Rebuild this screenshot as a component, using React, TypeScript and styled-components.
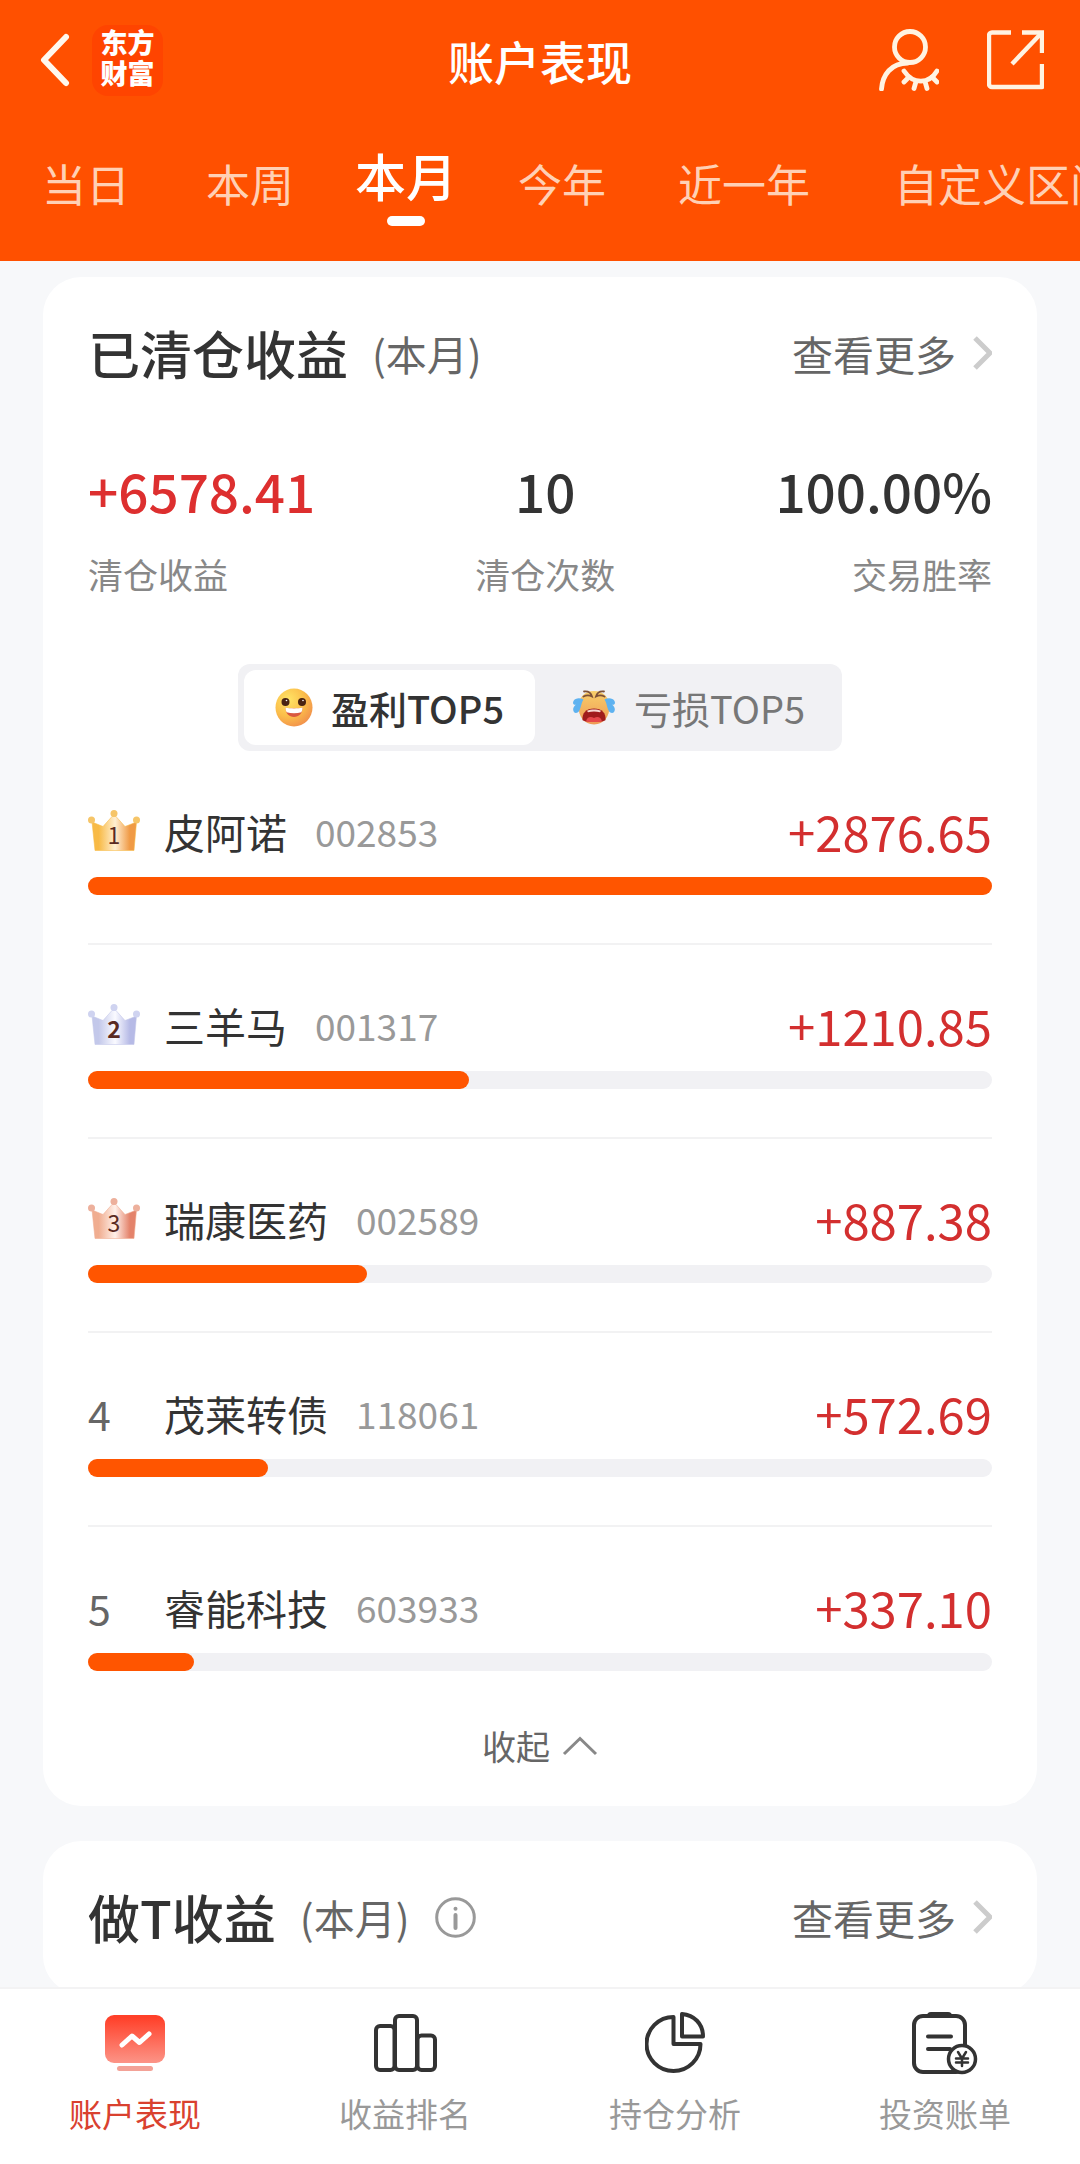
import React, { useState } from "react";
import styled, { createGlobalStyle } from "styled-components";

const GlobalStyle = createGlobalStyle`
  *, *::before, *::after { box-sizing: border-box; }
  html, body { margin: 0; padding: 0; }
  body {
    background: #f7f8fa;
    color: #333;
    font-family: "Noto Sans CJK SC", "Noto Sans", sans-serif;
    -webkit-font-smoothing: antialiased;
  }
  button { font: inherit; color: inherit; border: 0; padding: 0; margin: 0; background: none; cursor: pointer; }
  a { color: inherit; text-decoration: none; }
  svg { display: block; flex: none; }
  h1, h2, p, ol, ul, dl, dd { margin: 0; padding: 0; }
  ol, ul { list-style: none; }
`;

const Shell = styled.div`
  display: flex;
  flex-direction: column;
  height: 100vh;
  overflow: hidden;
`;

/* ---------- header ---------- */

const Header = styled.header`
  flex: none;
  background: #ff5000;
  color: #fff;
  overflow: hidden;
`;

const TitleBar = styled.div`
  display: grid;
  grid-template-columns: 1fr auto 1fr;
  align-items: center;
  height: 120px;
  padding: 0 36px;
`;

const BarStart = styled.div`
  display: flex;
  align-items: center;
  gap: 22px;
  padding-left: 4px;
`;

const BarEnd = styled.div`
  display: flex;
  align-items: center;
  justify-content: flex-end;
  gap: 48px;
`;

const Logo = styled.a`
  display: flex;
  flex-direction: column;
  align-items: center;
  justify-content: center;
  width: 71px;
  height: 71px;
  border-radius: 16px;
  background: #ff4400;
  font-family: "Liberation Sans", "Noto Sans CJK SC", sans-serif;
  font-size: 27px;
  font-weight: 900;
  line-height: 31px;
`;

const PageTitle = styled.h1`
  font-size: 46px;
  font-weight: 500;
  line-height: 60px;
`;

const Tabs = styled.nav`
  display: flex;
  align-items: flex-start;
  height: 141px;
  padding-left: 8px;
`;

const Tab = styled.button<{ $active: boolean; $chars: number }>`
  display: flex;
  flex: none;
  flex-direction: column;
  align-items: center;
  gap: 9px;
  width: ${(p) => (p.$chars + 1) * 52}px;
  padding-top: ${(p) => (p.$active ? 23 : 31)}px;
  font-size: ${(p) => (p.$active ? 51 : 44)}px;
  font-weight: ${(p) => (p.$active ? 500 : 400)};
  line-height: 64px;
  white-space: nowrap;
  color: ${(p) => (p.$active ? "#fff" : "#ffd0b5")};

  &:first-child { margin-right: 8px; }

  &::after {
    content: "";
    width: 38px;
    height: 10px;
    border-radius: 5px;
    background: ${(p) => (p.$active ? "#fff" : "transparent")};
  }
`;

/* ---------- cards ---------- */

const Main = styled.main`
  display: flex;
  flex: 1;
  flex-direction: column;
  gap: 35px;
  min-height: 0;
  padding: 16px 43px;
  overflow-y: auto;
  scrollbar-width: none;
`;

const Card = styled.section<{ $bottom: number }>`
  flex: none;
  padding: 46px 45px ${(p) => p.$bottom}px;
  border-radius: 38px;
  background: #fff;
`;

const CardHead = styled.div`
  display: flex;
  align-items: center;
  justify-content: space-between;
  height: 60px;
`;

const CardTitle = styled.h2`
  display: flex;
  align-items: center;
  font-size: 52px;
  font-weight: 500;
  line-height: 60px;
`;

const Period = styled.span`
  margin-left: 24px;
  font-size: 41px;
  font-weight: 400;
  color: #666;
`;

const InfoButton = styled.button`
  margin-left: 25px;
`;

const MoreLink = styled.a`
  display: flex;
  align-items: center;
  gap: 16px;
  font-size: 41px;
  line-height: 60px;
  color: #666;
`;

const Stats = styled.dl`
  display: flex;
  justify-content: space-between;
  margin-top: 75px;
`;

const Stat = styled.div<{ $align: string }>`
  display: flex;
  flex-direction: column-reverse;
  gap: 30px;
  align-items: ${(p) => p.$align};
`;

const StatLabel = styled.dt`
  font-size: 35px;
  line-height: 44px;
  color: #888;
`;

const StatValue = styled.dd<{ $up?: boolean }>`
  font-size: 53px;
  font-weight: 500;
  line-height: 64px;
  color: ${(p) => (p.$up ? "#dd2f2f" : "#333")};
`;

const Segment = styled.div`
  display: flex;
  gap: 6px;
  width: 604px;
  max-width: 100%;
  margin: 68px auto 0;
  padding: 6px;
  border-radius: 12px;
  background: #f1f1f4;
`;

const SegmentButton = styled.button<{ $active: boolean }>`
  display: flex;
  flex: 1 1 auto;
  align-items: center;
  justify-content: center;
  gap: 18px;
  height: 75px;
  border-radius: 12px;
  background: ${(p) => (p.$active ? "#fff" : "transparent")};
  color: ${(p) => (p.$active ? "#333" : "#777")};
  font-size: 38px;
  font-weight: ${(p) => (p.$active ? 500 : 400)};
  line-height: 48px;
`;

/* ---------- ranking ---------- */

const Row = styled.li`
  padding: 50px 0 48px;
  border-bottom: 2px solid #f2f2f3;

  &:last-child { border-bottom: 0; }
`;

const RowHead = styled.div`
  display: flex;
  align-items: center;
  height: 60px;
  margin-bottom: 16px;
  line-height: 60px;
`;

const Rank = styled.span`
  flex: none;
  width: 76px;
  font-size: 41px;
  color: #666;
`;

const StockName = styled.span`
  font-size: 41px;
  color: #333;
`;

const StockCode = styled.span`
  margin-left: 28px;
  font-size: 37px;
  color: #999;
`;

const Amount = styled.span`
  margin-left: auto;
  font-size: 49px;
  color: #d32f2f;
`;

const Track = styled.div`
  height: 18px;
  border-radius: 9px;
  background: #f1f1f4;
`;

const Fill = styled.div`
  height: 100%;
  border-radius: 9px;
  background: #ff5500;
`;

const Collapse = styled.button`
  display: flex;
  align-items: center;
  gap: 12px;
  margin: 0 auto;
  font-size: 34px;
  line-height: 54px;
  color: #666;
`;

/* ---------- bottom bar ---------- */

const BottomBar = styled.nav`
  display: grid;
  flex: none;
  grid-template-columns: repeat(4, 1fr);
  height: 177px;
  border-top: 2px solid #f3f3f4;
  background: #fff;
`;

const BottomItem = styled.a<{ $active?: boolean }>`
  display: flex;
  flex-direction: column;
  align-items: center;
  gap: 14px;
  padding-top: 22px;
  font-size: 33px;
  line-height: 48px;
  color: ${(p) => (p.$active ? "#d9412f" : "#999")};
`;

const IconBox = styled.span`
  display: flex;
  align-items: center;
  justify-content: center;
  height: 64px;
`;

/* ---------- icons ---------- */

const BackIcon = () => (
  <svg width="30" height="54" viewBox="0 0 30 54" fill="none" stroke="#fff8ee" strokeWidth="6" strokeLinecap="round" strokeLinejoin="round">
    <path d="M26 4 4 27l22 23" />
  </svg>
);

const HiddenUserIcon = () => (
  <svg width="60" height="62" viewBox="0 0 60 62" fill="none" stroke="#fff3e2" strokeWidth="4.8" strokeLinecap="round">
    <circle cx="31" cy="18" r="15.500" />
    <path d="M2.5 60C3.500 46 12 34 29 34" />
    <path d="M25 42c9 13.500 25 13.500 33 0" />
    <path d="M30 48l-5 5M37 52.500l-2 7M46 52.500l2 7M53 48l5 5" />
  </svg>
);

const ShareIcon = () => (
  <svg width="57" height="60" viewBox="0 0 57 60" fill="none" stroke="#fff3e2" strokeWidth="4.400">
    <path d="M24 2.500H5A3 3 0 0 0 2 5.500V54a3 3 0 0 0 3 3h50V34" strokeLinejoin="round" />
    <path d="M35 2.500h20V23" />
    <path d="M55 2.500 25 34" />
  </svg>
);

const ChevronRight = () => (
  <svg width="20" height="34" viewBox="0 0 20 34" fill="none" stroke="#ccc" strokeWidth="5">
    <path d="M3 2 18 17 3 32" />
  </svg>
);

const ChevronUp = () => (
  <svg width="36" height="20" viewBox="0 0 36 20" fill="none" stroke="#888" strokeWidth="3">
    <path d="M2 18 18 2.500 34 18" />
  </svg>
);

const InfoIcon = () => (
  <svg width="41" height="41" viewBox="0 0 41 41" fill="none" stroke="#999" strokeWidth="3">
    <circle cx="20.500" cy="20.500" r="18.800" />
    <path d="M20.500 18v13" strokeWidth="4" strokeLinecap="round" />
    <circle cx="20.500" cy="11.800" r="2" fill="#999" stroke="none" />
  </svg>
);

const HappyFace = () => (
  <svg width="38" height="39" viewBox="0 0 38 39">
    <defs>
      <radialGradient id="happy" cx="0.35" cy="0.3" r="0.8">
        <stop offset="0" stopColor="#ffe566" />
        <stop offset="0.55" stopColor="#fbbd4a" />
        <stop offset="1" stopColor="#f08a4c" />
      </radialGradient>
    </defs>
    <ellipse cx="19" cy="19.500" rx="18.500" ry="19" fill="url(#happy)" />
    <circle cx="10.500" cy="14" r="4" fill="#4a2313" />
    <circle cx="27" cy="14" r="4" fill="#4a2313" />
    <circle cx="11.500" cy="12.500" r="0.800" fill="#fff" />
    <circle cx="28" cy="12.500" r="0.800" fill="#fff" />
    <path d="M10.500 19.500c5 1.200 12 1.200 17 0 0 6-3.500 9.500-8.500 9.500s-8.500-3.500-8.500-9.500z" fill="#d9583f" />
    <path d="M10.500 19.500c5 1.200 12 1.200 17 0 0 2-.4 3.500-1.200 4.700-4.500 1.300-10.100 1.300-14.600 0-.8-1.200-1.200-2.700-1.200-4.700z" fill="#fff" />
  </svg>
);

const CryingFace = () => (
  <svg width="44" height="36" viewBox="0 0 44 36">
    <defs>
      <linearGradient id="cry" x1="0" y1="0" x2="0" y2="1">
        <stop offset="0" stopColor="#f8cf6a" />
        <stop offset="1" stopColor="#ef9a55" />
      </linearGradient>
    </defs>
    <path d="M22 1c10 0 15.500 7 15.500 16S32 34.500 22 34.500 6.500 26 6.500 17 12 1 22 1z" fill="url(#cry)" />
    <path d="M12 1.500c4-.5 7 1.500 8 5-3-1.500-5.500-1.500-8.500 0M32 1.500c-4-.5-7 1.500-8 5 3-1.500 5.500-1.500 8.500 0" fill="none" stroke="#7d5138" strokeWidth="1.800" strokeLinecap="round" />
    <path d="M10.500 30c-.5-7 3.500-11.500 11.500-11.500S34 23 33.500 30c-1.500 2.500-21.500 2.500-23 0z" fill="#a01c1c" />
    <path d="M15 20.800c4-1.800 10-1.800 14 0l-1 1.400c-4-1-8-1-12 0z" fill="#f6d9d2" />
    <path d="M14 31.500c1-4.500 4.500-5.500 8-3.500 3.500-2 7-1 8 3.500-4 .8-12 .8-16 0z" fill="#e5484a" />
    <path d="M11.500 9.500C8 7.500 3 8 1.500 11c-1.500 3 1 4.500 2.500 3.500C-.5 18 1 23 4 23c5 0 4.500-9.500 7.500-13.500z" fill="#5eb2f0" />
    <path d="M32.500 9.500C36 7.500 41 8 42.500 11c1.500 3-1 4.500-2.500 3.500 4.500 3.500 3 8.500 0 8.500-5 0-4.500-9.500-7.500-13.500z" fill="#5eb2f0" />
  </svg>
);

const crownColors = [
  { edge: "#f8ba45", mid: "#ffefd2", end: "#f09a45", ball: "#f6c568" },
  { edge: "#c3c8ea", mid: "#fafaff", end: "#b6bae6", ball: "#cfd3f0" },
  { edge: "#f0ad90", mid: "#fff0e9", end: "#e4836b", ball: "#edb09c" },
];

const Crown = ({ place }: { place: number }) => {
  const c = crownColors[place - 1];
  return (
    <svg width="52" height="42" viewBox="0 0 52 42" role="img" aria-label={`${place}`}>
      <defs>
        <linearGradient id={`crown${place}`} x1="0" x2="1" y1="0" y2="0">
          <stop offset="0.15" stopColor={c.edge} />
          <stop offset="0.52" stopColor={c.mid} />
          <stop offset="0.85" stopColor={c.end} />
        </linearGradient>
      </defs>
      <path d="M4 12 15 16.500 24 6.500h4L37 16.500 48.500 12 46 40.500H7z" fill={`url(#crown${place})`} stroke={c.edge} strokeWidth="0.800" strokeOpacity="0.700" />
      <circle cx="3.500" cy="10" r="3.500" fill={c.ball} />
      <circle cx="26" cy="3.500" r="3.500" fill={c.ball} />
      <circle cx="48.500" cy="10" r="3.500" fill={c.ball} />
      <text x="26" y="34" textAnchor="middle" fontSize="23" fontWeight={place === 2 ? 700 : 400} fill="#5a2a22">
        {place}
      </text>
    </svg>
  );
};

const PerformanceIcon = () => (
  <svg width="60" height="56" viewBox="0 0 60 56" fill="none">
    <defs>
      <linearGradient id="screen" x1="0" y1="0" x2="0" y2="1">
        <stop offset="0.05" stopColor="#ff4029" />
        <stop offset="1" stopColor="#fc9487" />
      </linearGradient>
    </defs>
    <rect width="60" height="48" rx="9" fill="url(#screen)" />
    <path d="M17 30 27 21l7.500 6.500L44 19" stroke="#fff" strokeWidth="5" strokeLinecap="round" strokeLinejoin="round" />
    <rect x="12" y="51" width="36" height="5" rx="2.500" fill="#f3a297" />
  </svg>
);

const RankingIcon = () => (
  <svg width="63" height="58" viewBox="0 0 63 58" fill="none" stroke="#333" strokeWidth="4">
    <rect x="2" y="12" width="18.500" height="44" rx="4" />
    <rect x="21" y="2" width="22" height="54" rx="4" />
    <rect x="43.500" y="21.500" width="17.500" height="34.500" rx="4" />
  </svg>
);

const PieIcon = () => (
  <svg width="60" height="62" viewBox="0 0 60 62" fill="none" stroke="#333" strokeWidth="4" strokeLinejoin="round">
    <path d="M28.500 5A27 27 0 1 0 55.500 32h-27z" />
    <path d="M37 2v22.500h21C58 11.500 49 3 37 2z" />
  </svg>
);

const BillIcon = () => (
  <svg width="66" height="64" viewBox="0 0 66 64" fill="none" stroke="#333" strokeWidth="4" strokeLinecap="round">
    <rect x="2" y="5" width="51" height="56" rx="9" />
    <path d="M19 1h17a4 4 0 0 1 4 4v2H15V5a4 4 0 0 1 4-4z" fill="#333" stroke="none" />
    <path d="M16 25.500h23M16 38h22" />
    <circle cx="50" cy="48" r="13.500" fill="#fff" strokeWidth="3.500" />
    <path d="M46 41l4 6.500 4-6.500M50 47.500V55M44 47.500h12M44 51.500h12" strokeWidth="2.500" />
  </svg>
);

/* ---------- data ---------- */

const periods = ["当日", "本周", "本月", "今年", "近一年", "自定义区间"];

const stats = [
  { label: "清仓收益", value: "+6578.41", up: true, align: "flex-start" },
  { label: "清仓次数", value: "10", align: "center" },
  { label: "交易胜率", value: "100.00%", align: "flex-end" },
];

const profits = [
  { name: "皮阿诺", code: "002853", amount: 2876.65 },
  { name: "三羊马", code: "001317", amount: 1210.85 },
  { name: "瑞康医药", code: "002589", amount: 887.38 },
  { name: "茂莱转债", code: "118061", amount: 572.69 },
  { name: "睿能科技", code: "603933", amount: 337.1 },
];

const bottomItems = [
  { label: "账户表现", icon: <PerformanceIcon /> },
  { label: "收益排名", icon: <RankingIcon /> },
  { label: "持仓分析", icon: <PieIcon /> },
  { label: "投资账单", icon: <BillIcon /> },
];

export default function App() {
  const [period, setPeriod] = useState("本月");
  const [side, setSide] = useState("profit");
  const top = profits[0].amount;

  return (
    <Shell>
      <GlobalStyle />
      <Header>
        <TitleBar>
          <BarStart>
            <button type="button" aria-label="返回"><BackIcon /></button>
            <Logo href="#home">
              <span>东方</span>
              <span>财富</span>
            </Logo>
          </BarStart>
          <PageTitle>账户表现</PageTitle>
          <BarEnd>
            <button type="button" aria-label="隐藏账户"><HiddenUserIcon /></button>
            <button type="button" aria-label="分享"><ShareIcon /></button>
          </BarEnd>
        </TitleBar>
        <Tabs>
          {periods.map((p) => (
            <Tab key={p} type="button" $active={p === period} $chars={p.length} onClick={() => setPeriod(p)}>
              {p}
            </Tab>
          ))}
        </Tabs>
      </Header>

      <Main>
        <Card $bottom={33}>
          <CardHead>
            <CardTitle>已清仓收益<Period>(本月)</Period></CardTitle>
            <MoreLink href="#closed">查看更多<ChevronRight /></MoreLink>
          </CardHead>
          <Stats>
            {stats.map((s) => (
              <Stat key={s.label} $align={s.align}>
                <StatLabel>{s.label}</StatLabel>
                <StatValue $up={s.up}>{s.value}</StatValue>
              </Stat>
            ))}
          </Stats>
          <Segment>
            <SegmentButton type="button" $active={side === "profit"} onClick={() => setSide("profit")}>
              <HappyFace />盈利TOP5
            </SegmentButton>
            <SegmentButton type="button" $active={side === "loss"} onClick={() => setSide("loss")}>
              <CryingFace />亏损TOP5
            </SegmentButton>
          </Segment>
          <ol>
            {profits.map((s, i) => (
              <Row key={s.code}>
                <RowHead>
                  <Rank>{i < 3 ? <Crown place={i + 1} /> : i + 1}</Rank>
                  <StockName>{s.name}</StockName>
                  <StockCode>{s.code}</StockCode>
                  <Amount>+{s.amount.toFixed(2)}</Amount>
                </RowHead>
                <Track>
                  <Fill style={{ width: `${(s.amount / top) * 100}%` }} />
                </Track>
              </Row>
            ))}
          </ol>
          <Collapse type="button">收起<ChevronUp /></Collapse>
        </Card>

        <Card $bottom={47}>
          <CardHead>
            <CardTitle>
              做T收益<Period>(本月)</Period>
              <InfoButton type="button" aria-label="说明"><InfoIcon /></InfoButton>
            </CardTitle>
            <MoreLink href="#intraday">查看更多<ChevronRight /></MoreLink>
          </CardHead>
        </Card>
      </Main>

      <BottomBar>
        {bottomItems.map((b, i) => (
          <BottomItem key={b.label} href={`#tab${i + 1}`} $active={i === 0}>
            <IconBox>{b.icon}</IconBox>
            {b.label}
          </BottomItem>
        ))}
      </BottomBar>
    </Shell>
  );
}
